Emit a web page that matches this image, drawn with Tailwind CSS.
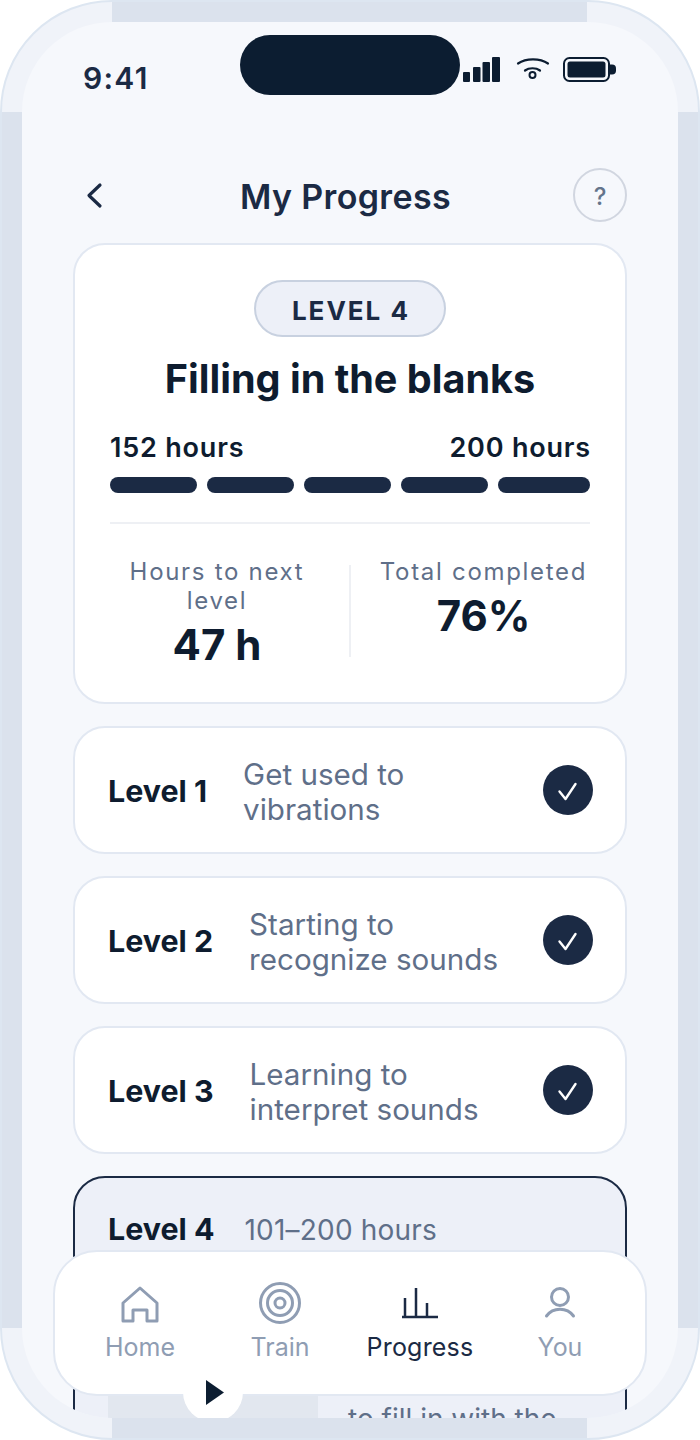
<!DOCTYPE html>
<html lang="en">
<head>
    <meta charset="UTF-8">
    <title>My Progress</title>
    <script src="https://cdn.jsdelivr.net/npm/@tailwindcss/browser@4"></script>
</head>
<body class="bg-white font-['Inter',sans-serif]">
    <div class="relative w-[700px] h-[1440px] overflow-hidden rounded-[112px] border-2 border-[#dde6f1] bg-[#f0f3f9]">
        <!-- device bezel -->
        <div class="absolute left-[110px] top-[-2px] w-[475px] h-[22px] bg-[#dbe2ed]"></div>
        <div class="absolute left-[110px] bottom-[-2px] w-[475px] h-[22px] bg-[#dbe2ed]"></div>
        <div class="absolute left-[-2px] top-[110px] w-[22px] h-[1216px] bg-[#dbe2ed]"></div>
        <div class="absolute right-[-2px] top-[110px] w-[22px] h-[1216px] bg-[#dbe2ed]"></div>

        <!-- screen -->
        <div class="absolute left-[20px] top-[20px] w-[656px] h-[1396px] overflow-hidden rounded-[90px] bg-[#f6f8fc] px-[51px]">
            <div class="absolute left-[218px] top-[13px] w-[220px] h-[60px] rounded-[30px] bg-[#0c1d31]"></div>

            <div class="flex justify-between h-[146px] pt-[35px] pl-[10px] pr-[11px]">
                <span class="mt-[4px] text-[30px] leading-[34px] font-semibold tracking-[1.3px] text-[#1b2a44]">9:41</span>
                <svg width="153" height="26" viewBox="0 0 153 26" fill="#0c1d31">
                    <rect x="0" y="15" width="7" height="10" rx="1"/>
                    <rect x="10" y="10" width="7.500" height="15" rx="1"/>
                    <rect x="19.500" y="5" width="7.500" height="20" rx="1"/>
                    <rect x="29" y="0" width="8" height="25" rx="1"/>
                    <path d="M55 6.500C63 1 77 1 85 6.500" fill="none" stroke="#0c1d31" stroke-width="2.200" stroke-linecap="round"/>
                    <path d="M62 13.500C66 10.500 73 10.500 77 13.500" fill="none" stroke="#0c1d31" stroke-width="2.200" stroke-linecap="round"/>
                    <circle cx="69.500" cy="18" r="3" fill="none" stroke="#0c1d31" stroke-width="2"/>
                    <rect x="101" y="1" width="45" height="23" rx="5.500" fill="none" stroke="#0c1d31" stroke-width="2"/>
                    <rect x="104.500" y="4.500" width="38" height="16" rx="2.500"/>
                    <path d="M147 7.500h2a4 4 0 0 1 4 4v2a4 4 0 0 1 -4 4h-2z"/>
                </svg>
            </div>

            <div class="flex justify-between items-center h-[54px]">
                <svg width="45" height="54" viewBox="0 0 45 54" fill="none" stroke="#1b2a44" stroke-width="3.200" stroke-linecap="round" stroke-linejoin="round">
                    <polyline points="27,17 16,27.500 27,38"/>
                </svg>
                <h1 class="pt-[4px] text-[34px] leading-[40px] font-semibold tracking-[0.35px] text-[#1b2a44]">My Progress</h1>
                <div class="flex items-center justify-center w-[54px] h-[54px] rounded-full border-2 border-[#d1d6e0] pt-[4px] text-[24px] font-medium text-[#64748b]">?</div>
            </div>

            <div class="flex flex-col gap-[22px] mt-[21px]">
                <!-- current level -->
                <section class="flex flex-col items-center h-[461px] rounded-[32px] border-2 border-[#e2e8f2] bg-white px-[35px] pt-[35px]">
                    <div class="flex items-center justify-center w-[192px] h-[57px] rounded-full border-2 border-[#c8d1e0] bg-[#edf0f8] pt-[3px] pl-[2px] text-[26px] font-bold tracking-[2px] text-[#1b2a44]">LEVEL 4</div>
                    <h2 class="mt-[19px] text-[39.600px] leading-[46px] font-bold text-[#0e1c2f]">Filling in the blanks</h2>
                    <div class="flex justify-between w-full mt-[30px] text-[27px] leading-[32px] font-semibold tracking-[0.8px] text-[#0e1c2f]">
                        <span>152 hours</span>
                        <span class="-mr-[1px]">200 hours</span>
                    </div>
                    <div class="flex gap-[10px] w-full mt-[13px]">
                        <div class="w-[87px] h-[16px] rounded-full bg-[#1b2a44]"></div>
                        <div class="w-[87px] h-[16px] rounded-full bg-[#1b2a44]"></div>
                        <div class="w-[87px] h-[16px] rounded-full bg-[#1b2a44]"></div>
                        <div class="w-[87px] h-[16px] rounded-full bg-[#1b2a44]"></div>
                        <div class="flex-1 h-[16px] rounded-full bg-[#1b2a44]"></div>
                    </div>
                    <div class="w-full h-[2px] mt-[29px] bg-[#eef0f4]"></div>
                    <div class="flex w-full mt-[33px]">
                        <div class="w-[214px] text-center">
                            <p class="text-[24px] leading-[29px] tracking-[1.7px] text-[#5f6f89]">Hours to next level</p>
                            <p class="mt-[5px] text-[42px] leading-[50px] font-bold text-[#0e1c2f]">47 h</p>
                        </div>
                        <div class="w-[2px] h-[92px] ml-[25px] mt-[8px] bg-[#eef0f4]"></div>
                        <div class="flex-1 ml-[26px] text-center">
                            <p class="text-[24px] leading-[29px] tracking-[1.7px] text-[#5f6f89]">Total completed</p>
                            <p class="mt-[5px] text-[42px] leading-[50px] font-bold text-[#0e1c2f]">76%</p>
                        </div>
                    </div>
                </section>

                <!-- finished levels -->
                <div class="flex items-center gap-[36px] h-[128px] rounded-[32px] border-2 border-[#e2e8f2] bg-white pl-[33px] pr-[32px]">
                    <span class="pt-[4px] text-[30.400px] font-bold text-[#0e1c2f]">Level 1</span>
                    <p class="flex-1 pt-[4px] text-[29.600px] leading-[35px] text-[#5f6f89]">Get used to<br>vibrations</p>
                    <div class="flex items-center justify-center w-[50px] h-[50px] rounded-full bg-[#1b2a44]">
                        <svg width="24" height="24" viewBox="0 0 24 24" fill="none" stroke="#fff" stroke-width="2.400" stroke-linecap="round" stroke-linejoin="round"><polyline points="3.500,13.500 9.500,21 19.500,6"/></svg>
                    </div>
                </div>
                <div class="flex items-center gap-[36px] h-[128px] rounded-[32px] border-2 border-[#e2e8f2] bg-white pl-[33px] pr-[32px]">
                    <span class="pt-[4px] text-[30.400px] font-bold text-[#0e1c2f]">Level 2</span>
                    <p class="flex-1 pt-[4px] text-[29.600px] leading-[35px] text-[#5f6f89]">Starting to<br>recognize sounds</p>
                    <div class="flex items-center justify-center w-[50px] h-[50px] rounded-full bg-[#1b2a44]">
                        <svg width="24" height="24" viewBox="0 0 24 24" fill="none" stroke="#fff" stroke-width="2.400" stroke-linecap="round" stroke-linejoin="round"><polyline points="3.500,13.500 9.500,21 19.500,6"/></svg>
                    </div>
                </div>
                <div class="flex items-center gap-[36px] h-[128px] rounded-[32px] border-2 border-[#e2e8f2] bg-white pl-[33px] pr-[32px]">
                    <span class="pt-[4px] text-[30.400px] font-bold text-[#0e1c2f]">Level 3</span>
                    <p class="flex-1 pt-[4px] text-[29.600px] leading-[35px] text-[#5f6f89]">Learning to<br>interpret sounds</p>
                    <div class="flex items-center justify-center w-[50px] h-[50px] rounded-full bg-[#1b2a44]">
                        <svg width="24" height="24" viewBox="0 0 24 24" fill="none" stroke="#fff" stroke-width="2.400" stroke-linecap="round" stroke-linejoin="round"><polyline points="3.500,13.500 9.500,21 19.500,6"/></svg>
                    </div>
                </div>

                <!-- active level, runs under the tab bar -->
                <div class="h-[300px] rounded-[32px] border-2 border-[#1b2a44] bg-[#edf0f8] pl-[33px] pt-[34px]">
                    <div class="flex items-center gap-[30px] h-[36px]">
                        <span class="text-[30.400px] font-bold text-[#0e1c2f]">Level 4</span>
                        <span class="text-[28px] tracking-[0.2px] text-[#5f6f89]">101–200 hours</span>
                    </div>
                    <div class="flex gap-[30px] mt-[22px]">
                        <div class="w-[210px] h-[200px] bg-[#e2e7ef]"></div>
                        <p class="pt-[132px] text-[28px] leading-[35px] text-[#5f6f89]">to fill in with the</p>
                    </div>
                </div>
            </div>

            <!-- tab bar -->
            <nav class="absolute left-[31px] top-[1228px] grid grid-cols-4 w-[594px] h-[146px] rounded-[44px] border-2 border-[#e2e8f2] bg-white px-[15px] pt-[27px]">
                <div class="flex flex-col items-center text-[#8f9db3]">
                    <svg width="48" height="48" viewBox="0 0 48 48" fill="none" stroke="#8f9db3" stroke-width="3" stroke-linejoin="round"><path d="M7 24 24 9 41 24V42H31V31H17V42H7Z"/></svg>
                    <span class="mt-[5px] text-[25px] leading-[30px]">Home</span>
                </div>
                <div class="flex flex-col items-center text-[#8f9db3]">
                    <svg width="48" height="48" viewBox="0 0 48 48" fill="none" stroke="#8f9db3" stroke-width="3"><circle cx="24" cy="24" r="19.500"/><circle cx="24" cy="24" r="12.500"/><circle cx="24" cy="24" r="5"/></svg>
                    <span class="mt-[5px] text-[25px] leading-[30px]">Train</span>
                </div>
                <div class="flex flex-col items-center text-[#1b2a44]">
                    <svg width="48" height="48" viewBox="0 0 48 48" fill="none" stroke="#1b2a44" stroke-width="2.500"><path d="M6 38H42M9 38V19M20 38V9M31 38V24"/></svg>
                    <span class="mt-[5px] text-[25px] leading-[30px] tracking-[0.2px]">Progress</span>
                </div>
                <div class="flex flex-col items-center text-[#8f9db3]">
                    <svg width="48" height="48" viewBox="0 0 48 48" fill="none" stroke="#8f9db3" stroke-width="3" stroke-linecap="round"><circle cx="24" cy="18" r="8.500"/><path d="M10.500 37C17 28 31 28 37.500 37"/></svg>
                    <span class="mt-[5px] text-[25px] leading-[30px]">You</span>
                </div>
            </nav>

            <!-- play button sits over the tab bar edge -->
            <div class="absolute left-[161px] top-[1340px] flex items-center justify-center w-[60px] h-[60px] rounded-full bg-white pl-[4px]">
                <svg width="18" height="25" viewBox="0 0 18 25" fill="#0c1d31"><polygon points="0,0 18,12.500 0,25"/></svg>
            </div>
        </div>
    </div>
</body>
</html>
